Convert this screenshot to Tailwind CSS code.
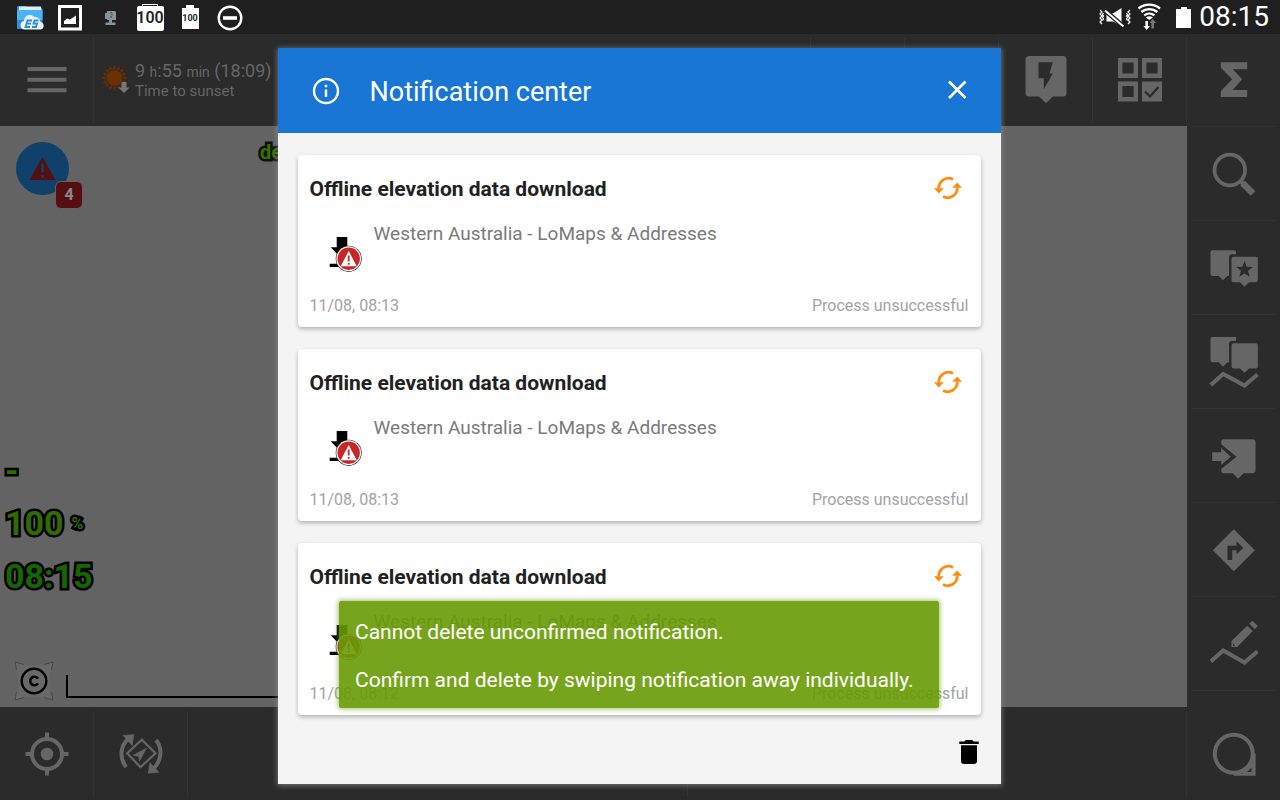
<!DOCTYPE html>
<html lang="en">
<head>
    <meta charset="UTF-8">
    <meta name="viewport" content="width=device-width, initial-scale=1.0">
    <title>Notification center</title>
    <script src="https://cdn.jsdelivr.net/npm/@tailwindcss/browser@4"></script>
</head>
<body class="relative flex min-h-screen flex-col overflow-hidden bg-[#2b2b2b] font-['Roboto',sans-serif]">

    <!-- Shared icons -->
    <svg class="hidden">
        <symbol id="icon-refresh" viewBox="0 0 28 28">
            <path d="M19 5.4A9.8 9.8 0 0 0 4.7 14.5M9 22.6a9.8 9.8 0 0 0 14.3-9" fill="none" stroke="#ff8c0f" stroke-width="2.8"/>
            <path d="M0 14.2h9.8l-5 5.3zM28 13.8h-9.8l5-5.3z" fill="#ff8c0f"/>
        </symbol>
        <symbol id="icon-download-error" viewBox="0 0 64 72">
            <path d="M26.7 16h10.6v10.3h6L32 38 20.7 26.3h6zM19.7 42.7h20V46h-20z"/>
            <circle cx="38.7" cy="37.7" r="13" fill="#222"/>
            <circle cx="38.7" cy="37.7" r="12.4" fill="#fff"/>
            <circle cx="38.7" cy="37.7" r="11.2" fill="#c62828"/>
            <path d="M38.7 30l8 15.3h-16z" fill="#fff"/>
            <path d="M37.8 34.5h1.8v6h-1.8zM37.8 42h1.8v1.8h-1.8zM32 46.2h13.4v1H32z" fill="#c62828"/>
        </symbol>
    </svg>

    <!-- Status bar -->
    <header class="flex h-[34px] items-center justify-between bg-[#1f1f1f] pr-[11px] pl-2.5 text-white">
        <div class="flex">
            <svg class="h-[34px] w-10" viewBox="0 0 40 34">
                <path d="M8 6h8l2 2h13a1.500 1.500 0 0 1 1.500 1.500V28a1 1 0 0 1-1 1H8a1 1 0 0 1-1-1V7a1 1 0 0 1 1-1z" fill="#2b8fdc"/>
                <path d="M9 6.500h22l.5 4H9z" fill="#d9efff"/>
                <path d="M7 10h25.500v10H7z" fill="#4db1f5"/>
                <path d="M14.500 29.500a4.300 4.300 0 0 1-.5-8.500 6 6 0 0 1 10.500-4 5.500 5.500 0 0 1 6 5 3.900 3.900 0 0 1 .5 7.500z" fill="#eef3f7"/>
                <path d="M22 20.500h-4.500l-2 6.500h4.500M17 23.700h4M28.500 20.500h-4l-1 3h3.500l-1 3.500h-4" fill="none" stroke="#2b8fdc" stroke-width="1.800"/>
            </svg>
            <svg class="h-[34px] w-10" viewBox="0 0 40 34">
                <path d="M9.500 6.500h21v22.500h-21z" fill="none" stroke="#fff" stroke-width="3"/>
                <path d="M14 24v-3l3-2.500 3 1 6-4V24z" fill="#fff"/>
            </svg>
            <svg class="h-[34px] w-10" viewBox="0 0 40 34" fill="#87939b">
                <path d="M17 11h8l1 1v8h-9z"/>
                <path d="M15 13h2v6h-2zM19 20h3v3h-3zM15.500 22.500h10V25h-10z"/>
                <path d="M20 12h2v1.500h-2zM21 14h2v1.500h-2zM20 16h2v2h-2z" fill="#5b666d"/>
            </svg>
            <div class="flex w-10 flex-col items-center justify-center">
                <div class="h-0.5 w-4 border-x border-t border-white"></div>
                <div class="flex h-[25px] w-[27px] items-center justify-center rounded-xs bg-white text-base leading-6 font-semibold text-[#1f1f1f]">100</div>
            </div>
            <div class="flex w-10 flex-col items-center justify-center">
                <div class="h-[3px] w-2 bg-white"></div>
                <div class="flex h-[21px] w-[17px] items-center justify-center bg-white text-[9px] font-bold text-[#1f1f1f]">100</div>
            </div>
            <svg class="h-[34px] w-10" viewBox="0 0 40 34" fill="none" stroke="#fff">
                <circle cx="20" cy="18" r="11.300" stroke-width="2.400"/>
                <path d="M13 18h14" stroke-width="3.600"/>
            </svg>
        </div>
        <div class="flex items-center">
            <svg class="h-[34px] w-[92px]" viewBox="0 0 92 34">
                <path d="M1 10l2 2-2 2 2 2-2 2 2 2-2 2 2 2M31 10l-2 2 2 2-2 2 2 2-2 2 2 2-2 2M4.500 13l-1 1.500 1 1.500-1 1.500 1 1.500-1 1.500M27.500 13l1 1.500-1 1.500 1 1.500-1 1.500 1 1.500" fill="none" stroke="#fff" stroke-width="1.200"/>
                <path d="M7.500 13.500h6.500L22.500 8v18L14 21.500H7.500z" fill="#fff"/>
                <path d="M6 10.500l18 15.500" stroke="#1f1f1f" stroke-width="4.500"/>
                <path d="M6 10.500l18.500 16" stroke="#fff" stroke-width="2"/>
                <path d="M39.500 8.500a17 17 0 0 1 21.500 0M42.300 12a12.500 12.500 0 0 1 16 0M45.200 15.300a8.300 8.300 0 0 1 10.200 0" fill="none" stroke="#fff" stroke-width="2.300"/>
                <path d="M46.800 17.500a6 6 0 0 1 7 0L50.300 20z" fill="#fff"/>
                <path d="M46.400 21h2.600v5h2l-3.300 4-3.300-4h2z" fill="#fff"/>
                <path d="M52.400 28.500h2.600V23h2l-3.300-4-3.300 4h2z" fill="#777"/>
                <path d="M82 7h6v2h4v19H77V9h5z" fill="#fff"/>
            </svg>
            <time class="pl-2 text-[28px] leading-[34px]">08:15</time>
        </div>
    </header>

    <!-- Top toolbar -->
    <nav class="flex h-[92px] items-stretch text-[#666]">
        <button class="flex w-[93px] items-center justify-center" aria-label="Menu">
            <svg class="size-12" viewBox="0 0 48 48" stroke="currentColor" stroke-width="4"><path d="M4.500 13h39M4.500 23.700h39M4.500 34.300h39"/></svg>
        </button>
        <div class="my-1 w-px bg-[#343434]"></div>
        <div class="flex flex-1 items-center gap-px pl-2">
            <svg class="h-8 w-8" viewBox="0 0 32 32">
                <path d="M12.500 1l1.700 4h-3.400zM12.500 27l1.700-4h-3.400zM-.5 14l4-1.700v3.400zM25.500 14l-4-1.700v3.400zM3.300 4.800l4 1.600-2.400 2.400zM21.700 4.800l-4 1.600 2.400 2.400zM3.300 23.200l4-1.600-2.400-2.400zM21.700 23.200l-4-1.600 2.400-2.400zM7.500 2l3.200 3-3.200 1.300zM17.500 2l-3.200 3 3.200 1.300zM7.500 26l3.200-3-3.200-1.300zM17.500 26l-3.200-3 3.200-1.300zM.5 9l4.400 0-1.400 3zM24.500 9l-4.400 0 1.400 3zM.5 19l4.400 0-1.400-3zM24.500 19l-4.400 0 1.400-3z" fill="#6b3000"/>
                <circle cx="12.500" cy="14" r="8" fill="#6b3000"/>
                <path d="M19.500 18h5v5.500h3L22 29l-5.500-5.500h3z" fill="#777"/>
            </svg>
            <div>
                <p class="text-lg leading-5">9 <span class="text-sm leading-5">h</span>:55 <span class="text-sm leading-5">min</span> (18:09)</p>
                <p class="text-[15px] leading-[18px]">Time to sunset</p>
            </div>
        </div>
        <div class="my-1 w-px bg-[#343434]"></div>
        <div class="w-[93px]"></div>
        <div class="my-1 w-px bg-[#343434]"></div>
        <div class="w-[93px]"></div>
        <div class="my-1 w-px bg-[#343434]"></div>
        <button class="flex w-[93px] items-center justify-center" aria-label="Quick point">
            <svg class="size-12" viewBox="0 0 48 48"><path d="M7 0h34a3.500 3.500 0 0 1 3.500 3.500V37a3.500 3.500 0 0 1-3.500 3.500h-10L24 47l-7-6.500H7A3.500 3.500 0 0 1 3.500 37V3.500A3.500 3.500 0 0 1 7 0z" fill="currentColor"/><path d="M16.500 6.300h14.300l-3.300 11.300h3.300l-9 15.700v-11h-5.300z" fill="#2b2b2b"/></svg>
        </button>
        <div class="my-1 w-px bg-[#343434]"></div>
        <button class="flex w-[93px] items-center justify-center" aria-label="Functions">
            <svg class="size-12" viewBox="0 0 48 48" fill="none" stroke="currentColor" stroke-width="4.400"><path d="M4.200 4.200h15.600v15.600H4.200zM28.200 4.200h15.600v15.600H28.200zM4.200 27.700h15.600v15.600H4.200z"/><path d="M26 25.500h20v20H26z" fill="currentColor" stroke="none"/><path d="M29 35.500l5 5L42.500 31" stroke="#2b2b2b" stroke-width="2.200"/></svg>
        </button>
        <div class="my-1 w-px bg-[#343434]"></div>
        <button class="flex w-[93px] items-center justify-center" aria-label="Sum">
            <svg class="size-12" viewBox="0 0 48 48"><path d="M10.800 6.300h26.400v7H22.800l9.400 10L22.800 34h14.400v7H10.800v-5.700l11.400-12-11.400-11.600z" fill="currentColor"/></svg>
        </button>
    </nav>

    <div class="flex flex-1">
        <!-- Map -->
        <main class="flex flex-1 flex-col bg-[#636363]">
            <div class="flex items-start pt-4 pl-4">
                <div class="relative">
                    <svg class="size-[53px]" viewBox="0 0 53 53">
                        <circle cx="26.500" cy="26.500" r="26.500" fill="#0f416b"/>
                        <path d="M26.500 15L39.500 38h-26z" fill="#560f11"/>
                        <path d="M25.200 21.500h2.600v9h-2.600zM25.200 33h2.600v2.800h-2.600z" fill="#0f416b"/>
                    </svg>
                    <span class="absolute -right-[14px] -bottom-[14px] flex size-7 items-center justify-center rounded-md border border-[#636363] bg-[#560f11] text-base font-bold text-[#8a8a8a]">4</span>
                </div>
                <span class="ml-[191px] text-xl leading-5 font-bold text-[#336f00] [-webkit-text-stroke:5px_#111] [paint-order:stroke_fill]">de</span>
            </div>
            <div class="mt-auto flex flex-col pl-[5px] text-[34px] leading-[53px] font-bold text-[#2f6b00] [-webkit-text-stroke:5px_#000] [paint-order:stroke_fill]">
                <p>-</p>
                <p class="flex items-center gap-2">100 <span class="text-base leading-5">%</span></p>
                <p class="text-[#156500]">08:15</p>
            </div>
            <div class="mt-[58px] mb-1.5 flex items-end pl-[14px]">
                <svg class="size-10" viewBox="0 0 40 40">
                    <path d="M1 1l8 2.500 11 1 11-1L39 1l-2.500 8-1 11 1 11 2.500 8-8-2.500-11-1-11 1L1 39l2.500-8 1-11-1-11z" fill="#696969"/>
                    <path d="M2.500 9L1 1l9 2.500M30 3.500L39 1l-1.500 8M37.500 31l1.500 8-9-2.500M10 36.500L1 39l1.500-8" fill="none" stroke="#484848"/>
                    <circle cx="20" cy="20" r="12.300" fill="none" stroke="#000" stroke-width="2.400"/>
                    <path d="M24 17.500a4.300 4.300 0 1 0 0 5" fill="none" stroke="#000" stroke-width="2.600"/>
                </svg>
                <div class="mb-[3px] ml-3 h-[23px] w-[260px] border-b-2 border-l-2 border-black"></div>
            </div>
        </main>

        <!-- Side toolbar -->
        <aside class="flex w-[93px] flex-col px-[5px] pb-4 text-[#666]">
            <button class="flex h-[95px] items-center justify-center border-y border-[#343434]" aria-label="Search">
                <svg class="size-12" viewBox="0 0 48 48" fill="none" stroke="currentColor"><circle cx="19.800" cy="20" r="15.300" stroke-width="3.800"/><path d="M30 30.500l3 3" stroke-width="4"/><path d="M32.500 33l10.500 10.500" stroke-width="6.500"/></svg>
            </button>
            <button class="flex h-[94px] items-center justify-center border-b border-[#343434]" aria-label="Points">
                <svg class="size-12" viewBox="0 0 48 48" fill="currentColor"><path d="M2.500 6.300H24a2 2 0 0 1 2 2v2h-4a3 3 0 0 0-3 3V32h-1.700L13 36.300 8.800 32H2.500a2 2 0 0 1-2-2V8.300a2 2 0 0 1 2-2z"/><path fill-rule="evenodd" d="M23.500 12.700h22.300a2 2 0 0 1 2 2v21.600a2 2 0 0 1-2 2H39l-4.500 4.400-4.500-4.400h-6.500a2 2 0 0 1-2-2V14.700a2 2 0 0 1 2-2zM34.500 17l-2.200 5.700-6.100.3 4.800 3.800-1.600 5.900 5.100-3.300 5.100 3.300-1.600-5.900 4.800-3.800-6.100-.3z"/></svg>
            </button>
            <button class="flex h-[94px] items-center justify-center border-b border-[#343434]" aria-label="Points and tracks">
                <svg class="size-12 overflow-visible" viewBox="0 0 48 48" fill="currentColor"><path d="M2.500-1H26v4h-4a3 3 0 0 0-3 3v18.300h-1.700L13 28.700l-4.200-4.400H2.500a2 2 0 0 1-2-2V1a2 2 0 0 1 2-2zM23.500 5.300h22.300a2 2 0 0 1 2 2v21.300a2 2 0 0 1-2 2H39l-4.500 4.100-4.500-4.100h-6.500a2 2 0 0 1-2-2V7.300a2 2 0 0 1 2-2z"/><path d="M.8 47l12.400-11 21.300 11.500L47.500 36.500" fill="none" stroke="currentColor" stroke-width="4"/></svg>
            </button>
            <button class="flex h-[94px] items-center justify-center border-b border-[#343434]" aria-label="Import">
                <svg class="size-12" viewBox="0 0 48 48" fill="currentColor"><path d="M2.200 20.300h9V16l9.600 8.700-9.600 8.300v-4h-9z"/><path d="M14 7.300h28.500a3 3 0 0 1 3 3v28a3 3 0 0 1-3 3h-9l-5.300 5.400-5.400-5.400H14a3 3 0 0 1-2.800-3V37l15.300-12.300L11.200 12.300v-2a3 3 0 0 1 2.800-3z"/></svg>
            </button>
            <button class="flex h-[94px] items-center justify-center border-b border-[#343434]" aria-label="Navigation">
                <svg class="size-12" viewBox="0 0 48 48"><path d="M23.800 3.300l21 21-21 21-21-21z" fill="currentColor"/><path d="M17.500 34V19.700h9v-4.400l6.700 6.700-6.700 6.300v-4h-4.300V34z" fill="#2b2b2b"/></svg>
            </button>
            <button class="flex h-[94px] items-center justify-center border-b border-[#343434]" aria-label="Edit track">
                <svg class="size-12" viewBox="0 0 48 48" fill="currentColor"><path fill-rule="evenodd" d="M21.500 27v-6L37.200 5.700l5.600 5.300L27.200 27zM23 23.500v2.200h2.200zM39.200 3.700l3.300-3 5.300 5.300-3 3.300z"/><path d="M.8 41.500l12.400-11 21.300 12L47.500 31.200" fill="none" stroke="currentColor" stroke-width="4"/></svg>
            </button>
        </aside>
    </div>

    <!-- Bottom toolbar -->
    <nav class="flex h-[93px] items-stretch text-[#666]">
        <button class="flex w-[93px] items-center justify-center" aria-label="Center on location">
            <svg class="size-12" viewBox="0 0 48 48" fill="none" stroke="currentColor" stroke-width="4"><circle cx="24" cy="24" r="15"/><circle cx="24" cy="24" r="6.300" fill="currentColor" stroke="none"/><path d="M24 2.500V9M24 39v6.500M2.500 24H9M39 24h6.500"/></svg>
        </button>
        <div class="my-1 w-px bg-[#343434]"></div>
        <button class="flex w-[93px] items-center justify-center" aria-label="Rotate map">
            <svg class="size-12" viewBox="0 0 48 48" fill="none" stroke="currentColor"><path d="M9.200 37C2.500 29 2.500 16.500 11.500 8.500M39 10c6.500 8 6 20-2 28" stroke-width="4"/><path d="M6.200 5.500l10.600-1-1.600 11zM31.200 43.200l10.600-1-9-9.400zM29.500 18.200l-13.300 7 5.600 1.300.7 4.700z" fill="currentColor" stroke-width=".6"/><path d="M24.800 9.800l13.700 13.400-15 14-13.300-14z" stroke-width="2.200"/></svg>
        </button>
        <div class="my-1 w-px bg-[#343434]"></div>
        <div class="flex-1"></div>
        <div class="my-1 w-px bg-[#343434]"></div>
        <div class="flex-1"></div>
        <div class="my-1 w-px bg-[#343434]"></div>
        <button class="flex w-[93px] items-center justify-center" aria-label="Assistant">
            <svg class="size-12" viewBox="0 0 48 48" fill="none" stroke="currentColor"><circle cx="23.800" cy="23.800" r="19" stroke-width="4"/><path d="M23.800 44.500h20.500v-20.700" stroke-width="2.600"/><path d="M33 43q7-3 9.500-10v10z" fill="#2b2b2b" stroke-width="2"/></svg>
        </button>
    </nav>

    <!-- Dialog -->
    <div class="absolute inset-x-0 top-[34px] bottom-0 flex items-center justify-center pr-0.5 pb-0.5">
        <section role="dialog" aria-labelledby="dialog-title" class="w-full max-w-[723px] bg-[#f4f4f4] shadow-[0_1px_5px_1px_rgba(150,150,150,0.6)]">
            <div class="flex h-[85px] items-center bg-[#1a76d4] pr-7 pl-8 text-white">
                <svg class="size-8" viewBox="0 0 32 32">
                    <circle cx="16" cy="16" r="12" fill="none" stroke="#fff" stroke-width="2.400"/>
                    <path d="M14.800 9.700h2.400v2.600h-2.400zM14.800 14.500h2.400V22h-2.400z" fill="#fff"/>
                </svg>
                <h1 id="dialog-title" class="ml-7 flex-1 pt-0.5 text-[27px] leading-9">Notification center</h1>
                <button class="flex size-8 items-center justify-center" aria-label="Close">
                    <svg class="size-8" viewBox="0 0 32 32" stroke="#fff" stroke-width="2.600"><path d="M8 6.500L24.500 23M24.500 6.500L8 23"/></svg>
                </button>
            </div>

            <div class="flex flex-col gap-[22px] px-5 pt-[22px]">
                <article class="rounded-sm bg-white px-3 pt-[19px] pb-[9px] shadow-[0_2px_4px_rgba(0,0,0,0.28)]">
                    <div class="flex h-7 items-center justify-between">
                        <h2 class="pt-0.5 text-[21px] leading-7 font-bold text-[#212121]">Offline elevation data download</h2>
                        <button class="flex w-[42px] justify-center" aria-label="Retry"><svg class="size-7"><use href="#icon-refresh"/></svg></button>
                    </div>
                    <div class="mt-[19px] flex h-[72px]">
                        <svg class="h-[72px] w-16"><use href="#icon-download-error"/></svg>
                        <p class="pt-px text-[19px] leading-6 text-[#7a7a7a]">Western Australia - LoMaps &amp; Addresses</p>
                    </div>
                    <div class="flex justify-between pt-px text-base leading-6 text-[#a3a3a3]">
                        <time>11/08, 08:13</time>
                        <span>Process unsuccessful</span>
                    </div>
                </article>

                <article class="rounded-sm bg-white px-3 pt-[19px] pb-[9px] shadow-[0_2px_4px_rgba(0,0,0,0.28)]">
                    <div class="flex h-7 items-center justify-between">
                        <h2 class="pt-0.5 text-[21px] leading-7 font-bold text-[#212121]">Offline elevation data download</h2>
                        <button class="flex w-[42px] justify-center" aria-label="Retry"><svg class="size-7"><use href="#icon-refresh"/></svg></button>
                    </div>
                    <div class="mt-[19px] flex h-[72px]">
                        <svg class="h-[72px] w-16"><use href="#icon-download-error"/></svg>
                        <p class="pt-px text-[19px] leading-6 text-[#7a7a7a]">Western Australia - LoMaps &amp; Addresses</p>
                    </div>
                    <div class="flex justify-between pt-px text-base leading-6 text-[#a3a3a3]">
                        <time>11/08, 08:13</time>
                        <span>Process unsuccessful</span>
                    </div>
                </article>

                <article class="rounded-sm bg-white px-3 pt-[19px] pb-[9px] shadow-[0_2px_4px_rgba(0,0,0,0.28)]">
                    <div class="flex h-7 items-center justify-between">
                        <h2 class="pt-0.5 text-[21px] leading-7 font-bold text-[#212121]">Offline elevation data download</h2>
                        <button class="flex w-[42px] justify-center" aria-label="Retry"><svg class="size-7"><use href="#icon-refresh"/></svg></button>
                    </div>
                    <div class="mt-[19px] flex h-[72px]">
                        <svg class="h-[72px] w-16"><use href="#icon-download-error"/></svg>
                        <p class="pt-px text-[19px] leading-6 text-[#7a7a7a]">Western Australia - LoMaps &amp; Addresses</p>
                    </div>
                    <div class="flex justify-between pt-px text-base leading-6 text-[#a3a3a3]">
                        <time>11/08, 08:12</time>
                        <span>Process unsuccessful</span>
                    </div>
                </article>
            </div>

            <div class="flex h-[69px] items-center justify-end pt-1 pr-4">
                <button class="flex size-8 items-center justify-center" aria-label="Delete all">
                    <svg class="size-8" viewBox="0 0 32 32"><path d="M6.300 5.500h5l1.500-1.500h6.400l1.500 1.500h5V8H6.300zM8 9.300h16V25a3 3 0 0 1-3 3H11a3 3 0 0 1-3-3z"/></svg>
                </button>
            </div>
        </section>
    </div>

    <!-- Toast -->
    <div class="absolute inset-x-0 bottom-[92px] flex justify-center pr-0.5">
        <div role="status" class="w-full max-w-[600px] rounded-xs bg-[#689a04]/90 px-4 pt-[7px] pb-1.5 text-[21px] leading-6 text-white shadow-[0_0_5px_1px_rgba(104,154,4,0.6)]">
            <p class="py-3">Cannot delete unconfirmed notification.</p>
            <p class="pt-3 pb-2.5">Confirm and delete by swiping notification away individually.</p>
        </div>
    </div>
</body>
</html>
